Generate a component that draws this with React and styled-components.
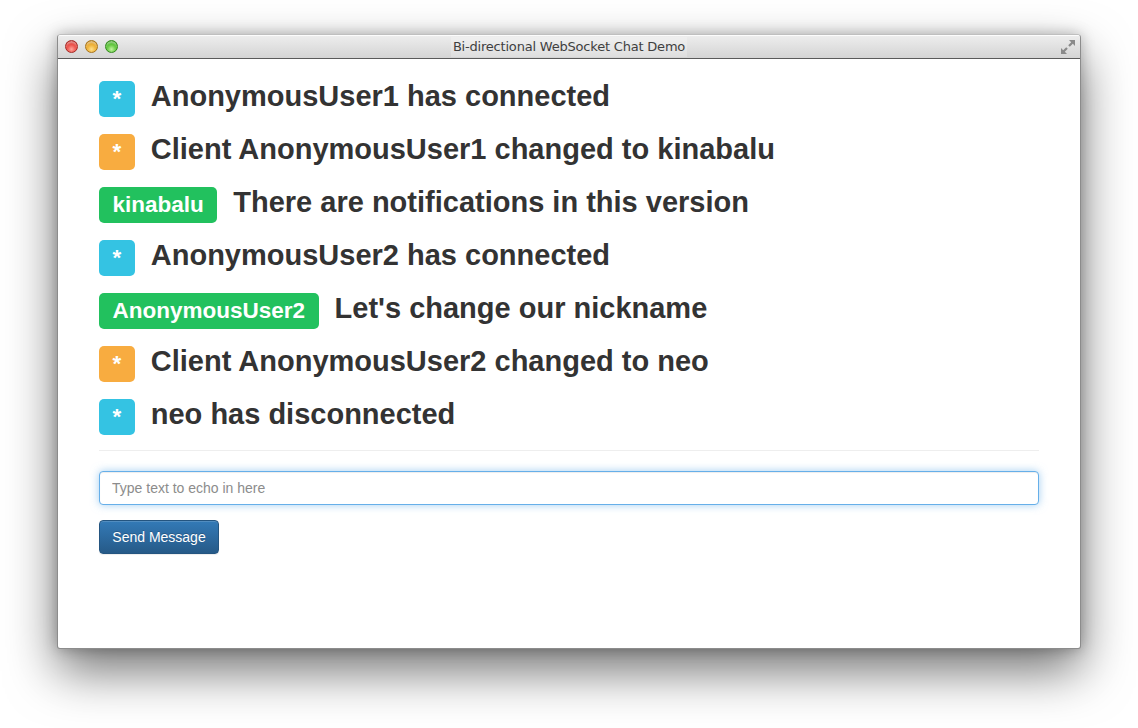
import React from "react";
import styled, { createGlobalStyle } from "styled-components";

const Global = createGlobalStyle`
  html, body { margin: 0; padding: 0; background: #ffffff; }
  body { font-family: "Liberation Sans", Arial, sans-serif; }
  * { box-sizing: border-box; }
`;

const Stage = styled.div`
  width: 1138px;
  height: 728px;
  padding: 34px 0 0 57px;
  background: #ffffff;
  overflow: hidden;
`;

const Window = styled.div`
  width: 1024px;
  height: 615px;
  display: flex;
  flex-direction: column;
  border-radius: 4px 4px 3px 3px;
  border: 1px solid rgba(0, 0, 0, 0.45);
  border-top-color: rgba(0, 0, 0, 0.25);
  box-shadow: 0 22px 50px rgba(0, 0, 0, 0.55), 0 0 14px rgba(0, 0, 0, 0.25);
  background: #ffffff;
  overflow: hidden;
`;

const TitleBar = styled.div`
  position: relative;
  height: 24px;
  flex: none;
  display: flex;
  align-items: center;
  justify-content: center;
  background: linear-gradient(#eeeeee, #d4d4d4);
  border-bottom: 1px solid #5a5a5a;
  box-shadow: inset 0 1px 0 rgba(255, 255, 255, 0.8);
`;

const Lights = styled.div`
  position: absolute;
  left: 7px;
  top: 5px;
  display: flex;
  gap: 7px;
`;

const Light = styled.span`
  width: 13px;
  height: 13px;
  border-radius: 50%;
  border: 1px solid ${(p) => p.$edge};
  background: radial-gradient(circle at 50% 75%, ${(p) => p.$light} 0%, ${(p) => p.$color} 55%, ${(p) => p.$edge} 100%);
  box-shadow: inset 0 2px 2px rgba(255, 255, 255, 0.45);
`;

const Title = styled.span`
  font-family: "DejaVu Sans", "Liberation Sans", sans-serif;
  font-size: 13px;
  letter-spacing: -0.2px;
  color: #3f3f3f;
  padding: 3px 2px;
  background: rgba(255, 255, 255, 0.22);
  line-height: 14px;
`;

const Resize = styled.svg`
  position: absolute;
  right: 4px;
  top: 4px;
`;

const Content = styled.div`
  flex: 1;
  padding: 22px 41px 0;
  display: flex;
  flex-direction: column;
`;

const Messages = styled.div`
  display: flex;
  flex-direction: column;
  gap: 17px;
`;

const Row = styled.div`
  display: flex;
  align-items: baseline;
  gap: 16px;
`;

const Label = styled.span`
  flex: none;
  height: 36px;
  line-height: 36px;
  padding: 0 13.5px;
  border-radius: 5px;
  font-size: 22.5px;
  font-weight: bold;
  color: #ffffff;
  background: ${(p) => p.$bg};
`;

const Text = styled.span`
  font-size: 29px;
  line-height: 29px;
  font-weight: bold;
  color: #333333;
  white-space: nowrap;
`;

const Divider = styled.hr`
  margin: 15px 0 20px;
  border: 0;
  border-top: 1px solid #eeeeee;
  height: 0;
  width: 940px;
`;

const Input = styled.input`
  width: 940px;
  height: 34px;
  padding: 6px 12px;
  font-family: "Liberation Sans", Arial, sans-serif;
  font-size: 14px;
  color: #555;
  border: 1px solid #66afe9;
  border-radius: 4px;
  outline: none;
  box-shadow: inset 0 1px 1px rgba(0, 0, 0, 0.075), 0 0 8px rgba(102, 175, 233, 0.6);
  &::placeholder { color: #8c8c8c; }
`;

const Button = styled.button`
  margin-top: 15px;
  align-self: flex-start;
  height: 34px;
  width: 120px;
  padding: 0;
  font-family: "Liberation Sans", Arial, sans-serif;
  font-size: 14px;
  color: #ffffff;
  border: 1px solid #245580;
  border-radius: 4px;
  background: linear-gradient(#337ab7, #265a88);
  text-shadow: 0 -1px 0 rgba(0, 0, 0, 0.2);
  box-shadow: inset 0 1px 0 rgba(255, 255, 255, 0.15), 0 1px 1px rgba(0, 0, 0, 0.075);
`;

const INFO = "#34c3e3";
const WARN = "#f8ac40";
const OK = "#22c15e";

const messages = [
  { label: "*", bg: INFO, text: "AnonymousUser1 has connected" },
  { label: "*", bg: WARN, text: "Client AnonymousUser1 changed to kinabalu" },
  { label: "kinabalu", bg: OK, text: "There are notifications in this version" },
  { label: "*", bg: INFO, text: "AnonymousUser2 has connected" },
  { label: "AnonymousUser2", bg: OK, text: "Let's change our nickname" },
  { label: "*", bg: WARN, text: "Client AnonymousUser2 changed to neo" },
  { label: "*", bg: INFO, text: "neo has disconnected" },
];

export default function App() {
  return (
    <Stage>
      <Global />
      <Window>
        <TitleBar>
          <Lights>
            <Light $color="#e83f38" $light="#ffa59c" $edge="#a52a25" />
            <Light $color="#eaa623" $light="#ffe08a" $edge="#a8741a" />
            <Light $color="#4fbf2a" $light="#c2f4a0" $edge="#338a1c" />
          </Lights>
          <Title>Bi-directional WebSocket Chat Demo</Title>
          <Resize width="16" height="16" viewBox="0 0 16 16">
            <g fill="#8a8a8a">
              <path d="M9 1h6v6l-2.2-2.2-3 3-1.6-1.6 3-3z" />
              <path d="M7 15H1V9l2.2 2.2 3-3 1.6 1.6-3 3z" />
            </g>
          </Resize>
        </TitleBar>
        <Content>
          <Messages>
            {messages.map((m, i) => (
              <Row key={i}>
                <Label $bg={m.bg}>{m.label}</Label>
                <Text>{m.text}</Text>
              </Row>
            ))}
          </Messages>
          <Divider />
          <Input placeholder="Type text to echo in here" />
          <Button>Send Message</Button>
        </Content>
      </Window>
    </Stage>
  );
}
